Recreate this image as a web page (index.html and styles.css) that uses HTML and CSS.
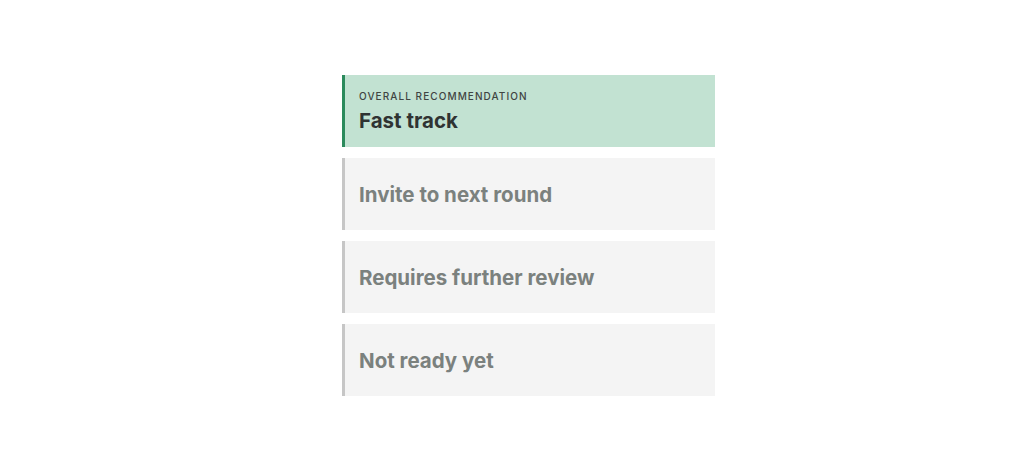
FILE: index.html
```html
<!DOCTYPE html>
<html>
<head>
<meta charset="utf-8">
<link rel="stylesheet" href="styles.css">
</head>
<body>
<div class="list">
  <div class="card selected">
    <div class="label">OVERALL RECOMMENDATION</div>
    <div class="title">Fast track</div>
  </div>
  <div class="card">
    <div class="title">Invite to next round</div>
  </div>
  <div class="card">
    <div class="title">Requires further review</div>
  </div>
  <div class="card">
    <div class="title">Not ready yet</div>
  </div>
</div>
</body>
</html>
```
FILE: styles.css
```css
html, body {
  margin: 0;
  padding: 0;
  background: #ffffff;
  font-family: Inter, "Noto Sans", sans-serif;
}
.list {
  display: flex;
  flex-direction: column;
  gap: 11px;
  width: 373px;
  margin: 75px 0 0 342px;
}
.card {
  box-sizing: border-box;
  height: 72px;
  background: #f4f4f4;
  border-left: 3px solid #c6c6c6;
  padding: 2px 14px 0;
  display: flex;
  flex-direction: column;
  justify-content: center;
}
.card .title {
  font-size: 20.5px;
  font-weight: 700;
  line-height: 24px;
  color: #7b817e;
}
.card.selected {
  background: #c2e2d2;
  border-left-color: #2b8a5c;
  justify-content: flex-start;
  padding-top: 15px;
}
.card.selected .title {
  color: #2f3332;
  margin-top: 7px;
}
.label {
  font-size: 10px;
  letter-spacing: 1.08px;
  line-height: 12px;
  color: #3f4442;
  font-weight: 500;
}
```
